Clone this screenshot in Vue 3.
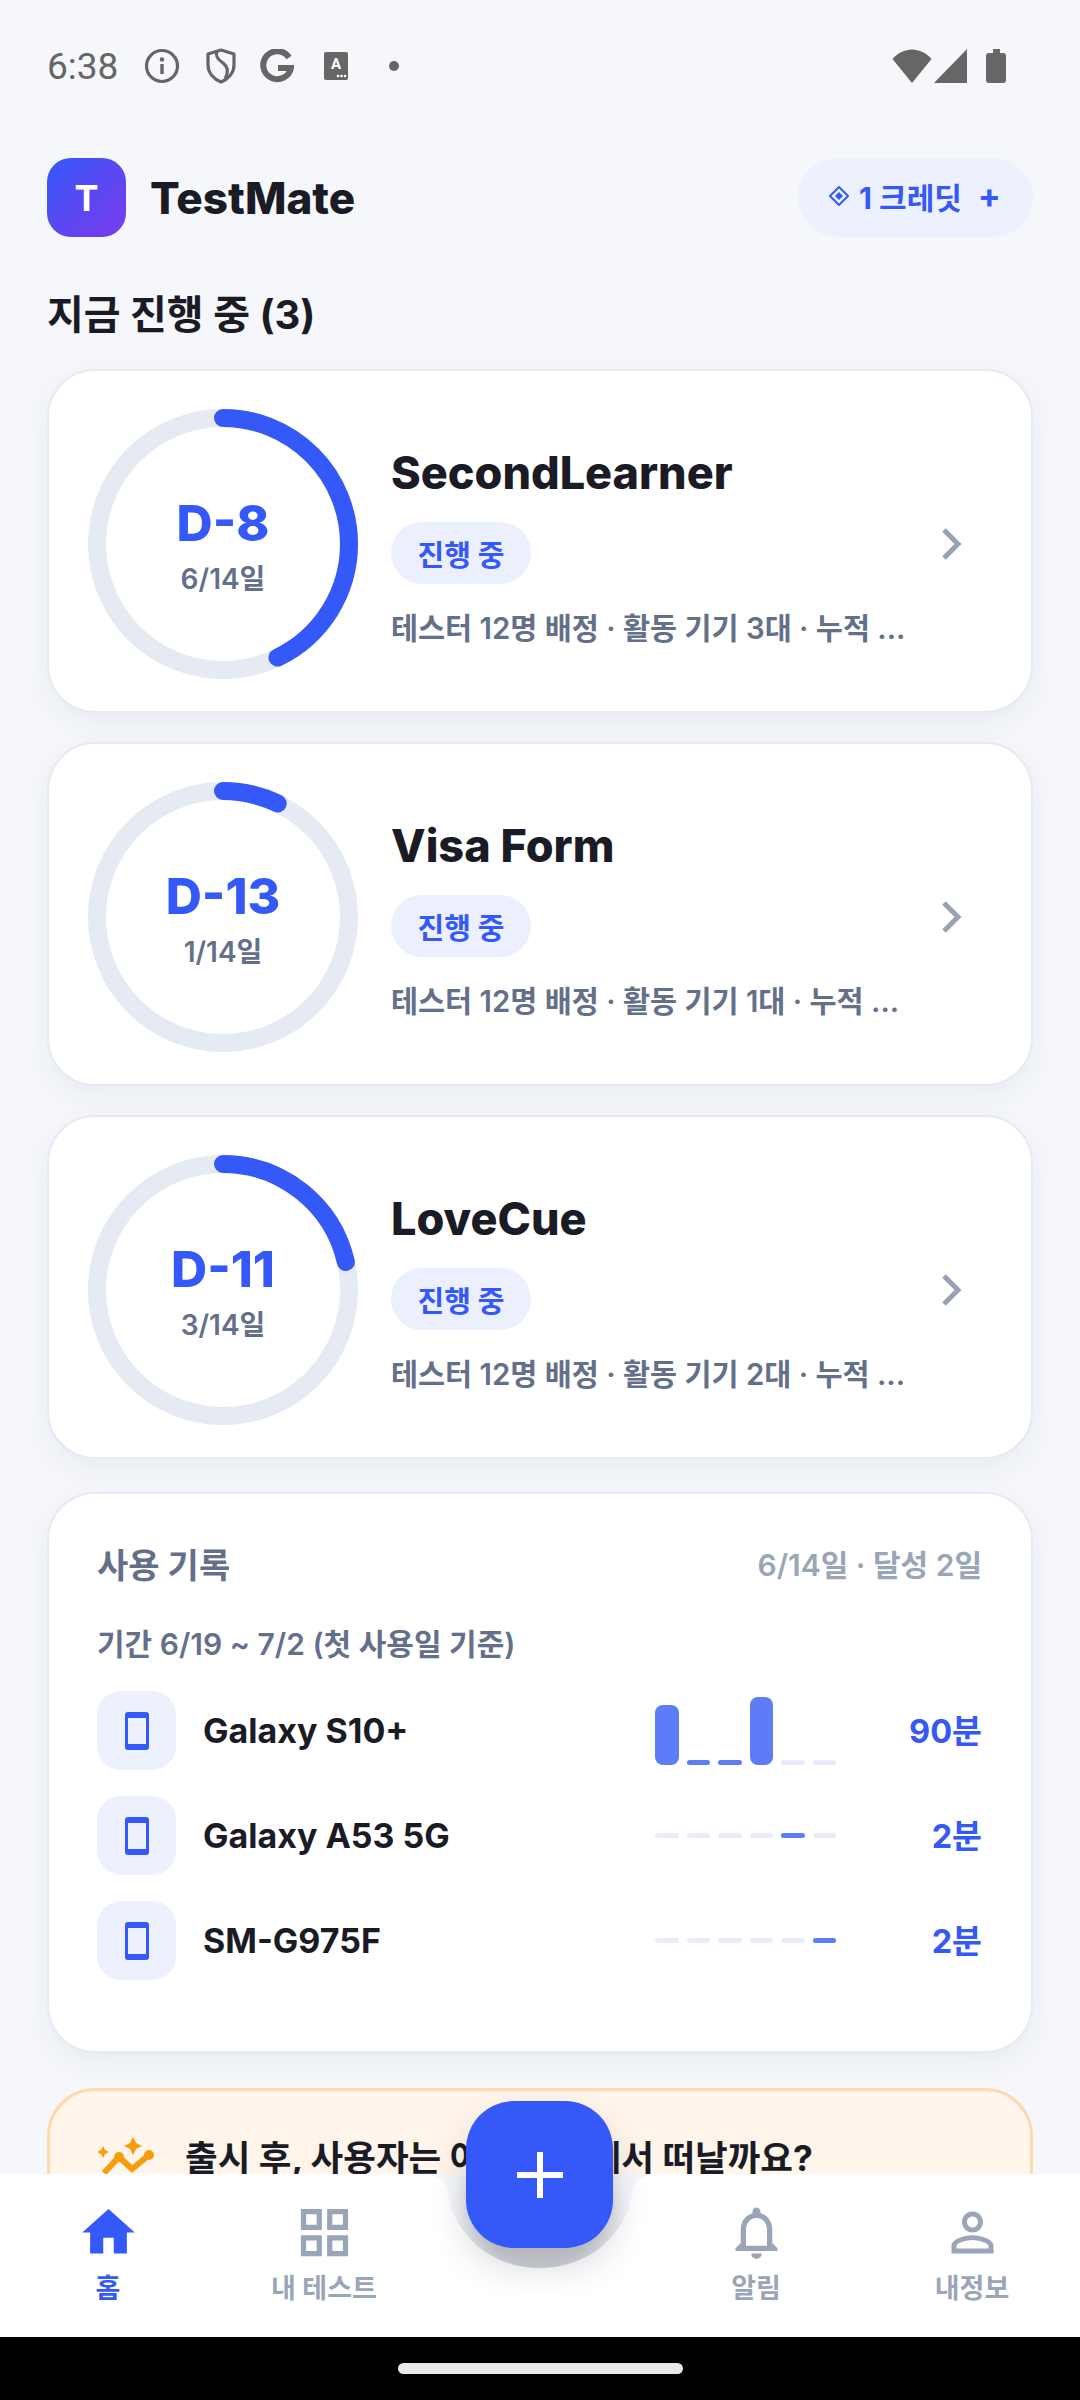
<template>
  <div class="screen">
    <!-- 상태바 -->
    <div class="status-bar">
      <span class="clock">6:38</span>
      <svg class="st-info" width="36" height="36" viewBox="0 0 36 36">
        <circle cx="18" cy="18" r="15.5" fill="none" stroke="#666" stroke-width="3.2" />
        <circle cx="18" cy="11.5" r="2.2" fill="#666" />
        <rect x="16.3" y="16" width="3.4" height="10" fill="#666" />
      </svg>
      <svg class="st-shield" width="30" height="36" viewBox="0 0 30 36">
        <path d="M15 2 L28 6 V17 C28 25 22 31 15 34 C8 31 2 25 2 17 V6 Z" fill="none" stroke="#666" stroke-width="3.2" stroke-linejoin="round" />
        <path d="M11 3 C9 9 13 12 17 15 C22 19 23 24 19 31" fill="none" stroke="#666" stroke-width="3" />
      </svg>
      <svg class="st-g" width="34" height="34" viewBox="0 0 34 34">
        <path d="M29 8.5 A14 14 0 1 0 31 19 H18" fill="none" stroke="#666" stroke-width="6" />
      </svg>
      <svg class="st-a" width="24" height="28" viewBox="0 0 24 28">
        <rect width="24" height="28" rx="2" fill="#666" />
        <text x="12" y="17" text-anchor="middle" class="st-a-letter">A</text>
        <circle cx="14" cy="24" r="1.3" fill="#fff" />
        <circle cx="17.5" cy="24" r="1.3" fill="#fff" />
        <circle cx="21" cy="24" r="1.3" fill="#fff" />
      </svg>
      <span class="st-dot"></span>
      <span class="st-spacer"></span>
      <svg width="40" height="34" viewBox="0 0 40 34">
        <path d="M20 34 L0.5 10 C6 4 12.5 0.5 20 0.5 C27.5 0.5 34 4 39.5 10 Z" fill="#666" />
      </svg>
      <svg class="st-signal" width="33" height="34" viewBox="0 0 33 34">
        <path d="M33 0 V34 H0 Z" fill="#666" />
      </svg>
      <svg class="st-battery" width="20" height="34" viewBox="0 0 20 34">
        <path d="M7 0 H14 V4 H17 Q20 4 20 7 V31 Q20 34 17 34 H3 Q0 34 0 31 V7 Q0 4 3 4 H7 Z" fill="#666" />
      </svg>
    </div>

    <!-- 상단 헤더 -->
    <header class="top">
      <div class="brand">
        <div class="logo">T</div>
        <span class="brand-name">TestMate</span>
      </div>
      <div class="credit">
        <svg width="20" height="20" viewBox="0 0 20 20">
          <path d="M10 1 L19 10 L10 19 L1 10 Z" fill="none" stroke="#3558F8" stroke-width="2" />
          <path d="M10 6 L14 10 L10 14 L6 10 Z" fill="#3558F8" />
        </svg>
        <span>1 크레딧</span>
        <span class="credit-plus">+</span>
      </div>
    </header>

    <h2 class="section-title">지금 진행 중 (3)</h2>

    <!-- 진행 중인 테스트 -->
    <div class="test-list">
      <div v-for="t in tests" :key="t.name" class="card test-card">
        <div class="ring">
          <svg width="270" height="270" viewBox="0 0 270 270">
            <circle cx="135" cy="135" :r="radius" fill="none" stroke="#E5EAF3" stroke-width="18" />
            <circle
              cx="135"
              cy="135"
              :r="radius"
              fill="none"
              stroke="#3558F8"
              stroke-width="18"
              stroke-linecap="round"
              :stroke-dasharray="dash(t.day)"
              transform="rotate(-90 135 135)"
            />
          </svg>
          <div class="ring-label">
            <span class="d-day">{{ t.dday }}</span>
            <span class="d-count">{{ t.day }}/14일</span>
          </div>
        </div>
        <div class="test-info">
          <div class="test-name">{{ t.name }}</div>
          <span class="state-pill">진행 중</span>
          <div class="test-desc">테스터 12명 배정 · 활동 기기 {{ t.devices }}대 · 누적 ...</div>
        </div>
        <svg class="chevron" width="22" height="34" viewBox="0 0 22 34">
          <path d="M3 3 L17 17 L3 31" fill="none" stroke="#98A2B3" stroke-width="5" />
        </svg>
      </div>
    </div>

    <!-- 사용 기록 -->
    <section class="card usage">
      <div class="usage-head">
        <span class="usage-title">사용 기록</span>
        <span class="usage-sum">6/14일 · 달성 2일</span>
      </div>
      <div class="usage-period">기간 6/19 ~ 7/2 (첫 사용일 기준)</div>
      <div class="device-list">
        <div v-for="d in devices" :key="d.name" class="device-row">
          <div class="device-icon">
            <svg width="24" height="38" viewBox="0 0 24 38">
              <path fill-rule="evenodd" d="M3 0 H21 Q24 0 24 3 V35 Q24 38 21 38 H3 Q0 38 0 35 V3 Q0 0 3 0 Z M3 6 V32 H21 V6 Z" fill="#3558F8" />
            </svg>
          </div>
          <span class="device-name">{{ d.name }}</span>
          <div class="bars">
            <span
              v-for="(h, i) in d.bars"
              :key="i"
              class="bar"
              :class="{ on: h > 0, tall: h > 5 }"
              :style="{ height: (h || 5) + 'px' }"
            ></span>
          </div>
          <span class="device-min">{{ d.minutes }}분</span>
        </div>
      </div>
    </section>

    <!-- 프로모션 배너 -->
    <section class="promo">
      <svg class="promo-icon" width="66" height="60" viewBox="0 0 66 60">
        <path d="M41 0 L44 6 L50 9 L44 12 L41 18 L38 12 L32 9 L38 6 Z" fill="#F59E0B" />
        <path d="M11 9 L13 13 L17 15 L13 17 L11 21 L9 17 L5 15 L9 13 Z" fill="#F59E0B" />
        <path d="M12 36 L27 20 L40 32 L57 18" fill="none" stroke="#F59E0B" stroke-width="6" />
        <circle cx="27" cy="20" r="5" fill="#F59E0B" />
        <circle cx="57" cy="18" r="5" fill="#F59E0B" />
      </svg>
      <span class="promo-title">출시 후, 사용자는 어느 화면에서 떠날까요?</span>
    </section>

    <!-- 하단 탭 -->
    <div class="bottom">
      <nav class="tabs">
        <svg class="notch" width="240" height="94" viewBox="0 0 240 94">
          <defs>
            <radialGradient id="notchFill" gradientUnits="userSpaceOnUse" cx="120" cy="40" r="90">
              <stop offset="0.6" stop-color="#CFD1D6" />
              <stop offset="0.75" stop-color="#DDDFE4" />
              <stop offset="0.92" stop-color="#F0F1F5" />
              <stop offset="1" stop-color="#F5F7FB" />
            </radialGradient>
          </defs>
          <path d="M0 0 C16 0 25 6 27 16 C33 60 70 94 120 94 C170 94 207 60 213 16 C215 6 224 0 240 0 Z" fill="url(#notchFill)" />
        </svg>
        <button v-for="tab in tabs" :key="tab.label" class="tab" :class="{ active: tab.active, gap: !tab.label }">
          <template v-if="tab.label">
            <svg width="63" height="63" viewBox="0 0 24 24">
              <path :d="tab.icon" fill="currentColor" />
            </svg>
            <span class="tab-label">{{ tab.label }}</span>
          </template>
        </button>
      </nav>
      <div class="gesture">
        <span class="gesture-pill"></span>
      </div>
      <button class="fab">
        <svg width="46" height="46" viewBox="0 0 46 46">
          <rect x="20" y="0" width="6" height="46" fill="#fff" />
          <rect x="0" y="20" width="46" height="6" fill="#fff" />
        </svg>
      </button>
    </div>
  </div>
</template>

<script setup>
const radius = 126

const tests = [
  { name: 'SecondLearner', dday: 'D-8', day: 6, devices: 3 },
  { name: 'Visa Form', dday: 'D-13', day: 1, devices: 1 },
  { name: 'LoveCue', dday: 'D-11', day: 3, devices: 2 },
]

const devices = [
  { name: 'Galaxy S10+', bars: [60, 5, 5, 68, 0, 0], minutes: 90 },
  { name: 'Galaxy A53 5G', bars: [0, 0, 0, 0, 5, 0], minutes: 2 },
  { name: 'SM-G975F', bars: [0, 0, 0, 0, 0, 5], minutes: 2 },
]

const tabs = [
  { label: '홈', active: true, icon: 'M10 20v-6h4v6h5v-8h3L12 3 2 12h3v8z' },
  {
    label: '내 테스트',
    icon: 'M3 3v8h8V3H3zm6 6H5V5h4v4zm-6 4v8h8v-8H3zm6 6H5v-4h4v4zm4-16v8h8V3h-8zm6 6h-4V5h4v4zm-6 4v8h8v-8h-8zm6 6h-4v-4h4v4z',
  },
  { label: '' },
  {
    label: '알림',
    icon: 'M12 22c1.1 0 2-.9 2-2h-4c0 1.1.9 2 2 2zm6-6v-5c0-3.07-1.63-5.64-4.5-6.32V4c0-.83-.67-1.5-1.5-1.5s-1.5.67-1.5 1.5v.68C7.64 5.36 6 7.92 6 11v5l-2 2v1h16v-1l-2-2zm-2 1H8v-6c0-2.48 1.51-4.5 4-4.5s4 2.02 4 4.5v6z',
  },
  {
    label: '내정보',
    icon: 'M12 5.9c1.16 0 2.1.94 2.1 2.1s-.94 2.1-2.1 2.1S9.9 9.16 9.9 8s.94-2.1 2.1-2.1m0 9c2.97 0 6.1 1.46 6.1 2.1v1.1H5.9V17c0-.64 3.13-2.1 6.1-2.1M12 4C9.79 4 8 5.79 8 8s1.79 4 4 4 4-1.79 4-4-1.79-4-4-4zm0 9c-2.67 0-8 1.34-8 4v3h16v-3c0-2.66-5.33-4-8-4z',
  },
]

// 14일 기준 진행률을 링 길이로 변환
const dash = (day) => {
  const total = 2 * Math.PI * radius
  return `${(total * day) / 14} ${total}`
}
</script>

<style>
body {
  background: #f5f7fb;
}
</style>

<style scoped>
.screen {
  position: relative;
  width: 1080px;
  height: 2400px;
  overflow: hidden;
  background: #f5f7fb;
  font-family: Inter, 'Noto Sans CJK KR', sans-serif;
  color: #1a1b25;
}

.status-bar {
  display: flex;
  align-items: center;
  height: 132px;
  padding: 0 74px 0 47px;
  box-sizing: border-box;
}
.clock {
  font-family: Roboto, sans-serif;
  font-size: 37px;
  color: #666;
  width: 71px;
}
.st-info {
  margin-left: 26px;
}
.st-shield {
  margin-left: 26px;
}
.st-g {
  margin-left: 24px;
}
.st-a {
  margin-left: 30px;
}
.st-a-letter {
  font-family: Roboto, sans-serif;
  font-size: 15px;
  font-weight: 700;
  fill: #fff;
}
.st-dot {
  width: 10px;
  height: 10px;
  margin-left: 41px;
  border-radius: 50%;
  background: #666;
}
.st-spacer {
  flex: 1;
}
.st-signal {
  margin-left: 2px;
}
.st-battery {
  margin-left: 19px;
}

.top {
  display: flex;
  align-items: center;
  justify-content: space-between;
  height: 79px;
  margin-top: 26px;
  padding: 0 47px;
}
.brand {
  display: flex;
  align-items: center;
  gap: 24px;
}
.logo {
  display: flex;
  align-items: center;
  justify-content: center;
  width: 79px;
  height: 79px;
  border-radius: 24px;
  background: linear-gradient(135deg, #3558f8, #7c3aed);
  color: #fff;
  font-size: 36px;
  font-weight: 700;
}
.brand-name {
  font-size: 44px;
  font-weight: 800;
}
.credit {
  display: flex;
  align-items: center;
  gap: 10px;
  width: 235px;
  height: 79px;
  padding: 0 0 4px 31px;
  box-sizing: border-box;
  border-radius: 40px;
  background: #edf1fe;
  color: #3558f8;
  font-size: 30px;
  font-weight: 700;
}
.credit-plus {
  margin-left: 6px;
  font-size: 34px;
}

.section-title {
  margin: 55px 47px 31px;
  font-size: 40px;
  line-height: 46px;
  font-weight: 700;
}

.card {
  box-sizing: border-box;
  border: 2px solid #e6eaf3;
  border-radius: 48px;
  background: #fff;
  box-shadow: 0 10px 30px rgba(40, 50, 90, 0.06);
}

.test-list {
  display: flex;
  flex-direction: column;
  gap: 29px;
  padding: 0 47px;
}
.test-card {
  display: flex;
  align-items: center;
  height: 344px;
  padding: 5px 68px 0 39px;
}
.ring {
  position: relative;
  flex: none;
  width: 270px;
  height: 270px;
}
.ring-label {
  position: absolute;
  inset: 3px 0 0;
  display: flex;
  flex-direction: column;
  align-items: center;
  justify-content: center;
  gap: 10px;
}
.d-day {
  font-size: 50px;
  line-height: 58px;
  font-weight: 800;
  color: #3558f8;
}
.d-count {
  font-size: 28px;
  line-height: 34px;
  font-weight: 600;
  color: #64708a;
}
.test-info {
  flex: 1;
  min-width: 0;
  margin-left: 33px;
  padding-top: 5px;
  display: flex;
  flex-direction: column;
  align-items: flex-start;
}
.test-name {
  font-size: 45px;
  line-height: 54px;
  font-weight: 800;
}
.state-pill {
  display: flex;
  align-items: center;
  justify-content: center;
  width: 140px;
  height: 62px;
  margin-top: 22px;
  border-radius: 31px;
  background: #ebeffe;
  color: #3558f8;
  font-size: 29px;
  font-weight: 700;
}
.test-desc {
  margin-top: 27px;
  font-size: 29.4px;
  line-height: 36px;
  font-weight: 600;
  color: #64708a;
  white-space: nowrap;
}
.chevron {
  flex: none;
}

.usage {
  margin: 33px 47px 0;
  height: 561px;
  padding: 47px 49px 0 48px;
}
.usage-head {
  display: flex;
  align-items: center;
  justify-content: space-between;
  height: 44px;
}
.usage-title {
  font-size: 34px;
  font-weight: 700;
  color: #64708a;
}
.usage-sum {
  font-size: 30px;
  font-weight: 600;
  color: #9aa5b8;
}
.usage-period {
  margin-top: 41px;
  font-size: 30px;
  line-height: 36px;
  font-weight: 600;
  color: #64708a;
}
.device-list {
  display: flex;
  flex-direction: column;
  gap: 26px;
  margin-top: 29px;
}
.device-row {
  display: flex;
  align-items: center;
  height: 79px;
}
.device-icon {
  display: flex;
  align-items: center;
  justify-content: center;
  flex: none;
  width: 79px;
  height: 79px;
  border-radius: 24px;
  background: #edf1fe;
}
.device-name {
  flex: 1;
  margin-left: 27px;
  font-size: 34px;
  font-weight: 700;
}
.bars {
  display: flex;
  align-items: flex-end;
  gap: 8px;
  width: 181px;
}
.bar {
  flex: 1;
  border-radius: 3px;
  background: #e8ecfc;
}
.bar.on {
  background: #5f7cf8;
}
.bar.tall {
  border-radius: 8px;
}
.device-min {
  width: 146px;
  margin-bottom: 4px;
  text-align: right;
  font-size: 32.5px;
  font-weight: 700;
  color: #3558f8;
}

.promo {
  display: flex;
  align-items: flex-start;
  gap: 27px;
  height: 260px;
  margin: 35px 47px 0;
  padding: 46px 42px 0;
  box-sizing: border-box;
  border: 3px solid #ffd8ae;
  border-radius: 48px;
  background: #fff5eb;
}
.promo-title {
  font-size: 35.5px;
  line-height: 44px;
  font-weight: 700;
}

.bottom {
  position: absolute;
  left: 0;
  right: 0;
  bottom: 0;
}
.tabs {
  position: relative;
  display: grid;
  grid-template-columns: repeat(5, 216px);
  height: 163px;
  background: #fff;
}
.notch {
  position: absolute;
  left: 420px;
  top: 0;
}
.tab {
  display: flex;
  flex-direction: column;
  align-items: center;
  padding: 27px 0 0;
  border: 0;
  background: none;
  color: #9aa5b8;
  font-family: inherit;
}
.tab.active {
  color: #3558f8;
}
.tab-label {
  margin-top: 7px;
  font-size: 27px;
  line-height: 36px;
  font-weight: 700;
}
.gesture {
  display: flex;
  justify-content: center;
  height: 63px;
  padding-top: 26px;
  box-sizing: border-box;
  background: #000;
}
.gesture-pill {
  width: 285px;
  height: 11px;
  border-radius: 6px;
  background: #e8e8e8;
}
.fab {
  position: absolute;
  left: 466px;
  top: -73px;
  display: flex;
  align-items: center;
  justify-content: center;
  width: 147px;
  height: 147px;
  padding: 0;
  border: 0;
  border-radius: 48px;
  background: #3558f8;
  box-shadow: 0 18px 36px rgba(20, 25, 50, 0.16);
}
</style>
